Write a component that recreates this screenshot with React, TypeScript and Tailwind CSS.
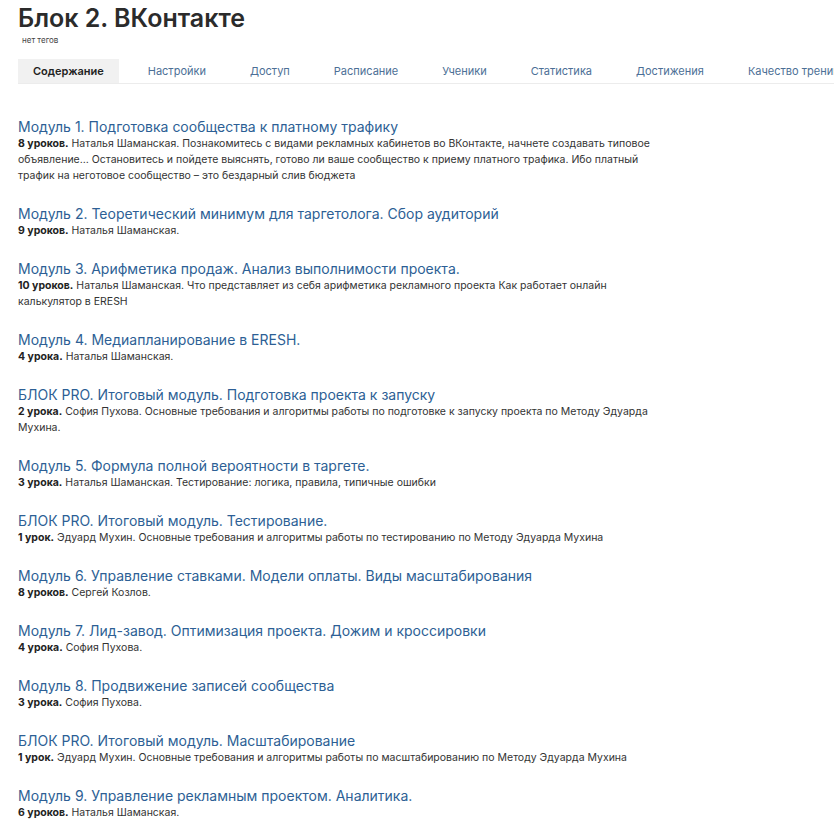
// Курс: страница блока с вкладками и списком модулей.
const tabs = [
  "Содержание",
  "Настройки",
  "Доступ",
  "Расписание",
  "Ученики",
  "Статистика",
  "Достижения",
  "Качество тренингов",
];

type Module = { title: string; count: string; text: string };

const modules: Module[] = [
  {
    title: "Модуль 1. Подготовка сообщества к платному трафику",
    count: "8 уроков.",
    text: "Наталья Шаманская. Познакомитесь с видами рекламных кабинетов во ВКонтакте, начнете создавать типовое объявление… Остановитесь и пойдете выяснять, готово ли ваше сообщество к приему платного трафика. Ибо платный трафик на неготовое сообщество – это бездарный слив бюджета",
  },
  {
    title: "Модуль 2. Теоретический минимум для таргетолога. Сбор аудиторий",
    count: "9 уроков.",
    text: "Наталья Шаманская.",
  },
  {
    title: "Модуль 3. Арифметика продаж. Анализ выполнимости проекта.",
    count: "10 уроков.",
    text: "Наталья Шаманская. Что представляет из себя арифметика рекламного проекта Как работает онлайн калькулятор в ERESH",
  },
  {
    title: "Модуль 4. Медиапланирование в ERESH.",
    count: "4 урока.",
    text: "Наталья Шаманская.",
  },
  {
    title: "БЛОК PRO. Итоговый модуль. Подготовка проекта к запуску",
    count: "2 урока.",
    text: "София Пухова. Основные требования и алгоритмы работы по подготовке к запуску проекта по Методу Эдуарда Мухина.",
  },
  {
    title: "Модуль 5. Формула полной вероятности в таргете.",
    count: "3 урока.",
    text: "Наталья Шаманская. Тестирование: логика, правила, типичные ошибки",
  },
  {
    title: "БЛОК PRO. Итоговый модуль. Тестирование.",
    count: "1 урок.",
    text: "Эдуард Мухин. Основные требования и алгоритмы работы по тестированию по Методу Эдуарда Мухина",
  },
  {
    title: "Модуль 6. Управление ставками. Модели оплаты. Виды масштабирования",
    count: "8 уроков.",
    text: "Сергей Козлов.",
  },
  {
    title: "Модуль 7. Лид-завод. Оптимизация проекта. Дожим и кроссировки",
    count: "4 урока.",
    text: "София Пухова.",
  },
  {
    title: "Модуль 8. Продвижение записей сообщества",
    count: "3 урока.",
    text: "София Пухова.",
  },
  {
    title: "БЛОК PRO. Итоговый модуль. Масштабирование",
    count: "1 урок.",
    text: "Эдуард Мухин. Основные требования и алгоритмы работы по масштабированию по Методу Эдуарда Мухина",
  },
  {
    title: "Модуль 9. Управление рекламным проектом. Аналитика.",
    count: "6 уроков.",
    text: "Наталья Шаманская.",
  },
];

export default function App() {
  return (
    <div
      className="h-[835px] w-[834px] overflow-hidden bg-white pl-[18px] text-[#333]"
      style={{ fontFamily: "Inter, 'Noto Sans', sans-serif" }}
    >
      <h1 className="pt-[3px] text-[25px] font-semibold leading-[30px] text-[#2b2b2b]">
        Блок 2. ВКонтакте
      </h1>
      <div className="mt-[2px] pl-[4px] text-[8px] leading-[10px] text-[#444]">нет тегов</div>

      <div className="mt-[14px] flex whitespace-nowrap border-b border-[#ececec]">
        {tabs.map((t, i) => (
          <div
            key={t}
            className={
              i === 0
                ? "mr-[14px] bg-[#f1f1f1] px-[15px] py-[5px] text-[11px] font-semibold leading-[14px] text-[#222]"
                : "mr-[14px] px-[15px] py-[5px] text-[11px] leading-[14px] text-[#4c6f96]"
            }
          >
            {t}
          </div>
        ))}
      </div>

      <div className="mt-[33px] flex flex-col gap-[20px]">
        {modules.map((m) => (
          <div key={m.title}>
            <div className="text-[14px] leading-[19px] text-[#2d5f95]">{m.title}</div>
            <p className="w-[650px] text-[10.5px] leading-[16px] text-[#333]">
              <span className="font-bold text-[#222]">{m.count}</span> {m.text}
            </p>
          </div>
        ))}
      </div>
    </div>
  );
}
